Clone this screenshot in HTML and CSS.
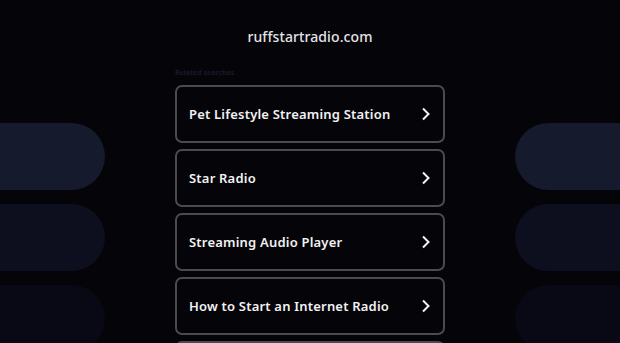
FILE: index.html
```html
<!DOCTYPE html>
<html>
<head>
  <meta name="viewport" content="width=device-width, initial-scale=1.0">
  <link rel="stylesheet" href="styles.css">
</head>
<body>
  <div class="side side-left">
    <div class="pill pill-1"></div>
    <div class="pill pill-2"></div>
    <div class="pill pill-3"></div>
  </div>
  <div class="side side-right">
    <div class="pill pill-1"></div>
    <div class="pill pill-2"></div>
    <div class="pill pill-3"></div>
  </div>
  <div class="container">
    <div class="domain">ruffstartradio.com</div>
    <div class="label">Related searches</div>
    <div class="links">
      <a class="link" href="#"><span>Pet Lifestyle Streaming Station</span><svg class="chev" viewBox="0 0 10 14"><path d="M2 1.5 L7.5 7 L2 12.5" /></svg></a>
      <a class="link" href="#"><span>Star Radio</span><svg class="chev" viewBox="0 0 10 14"><path d="M2 1.5 L7.5 7 L2 12.5" /></svg></a>
      <a class="link" href="#"><span>Streaming Audio Player</span><svg class="chev" viewBox="0 0 10 14"><path d="M2 1.5 L7.5 7 L2 12.5" /></svg></a>
      <a class="link" href="#"><span>How to Start an Internet Radio</span><svg class="chev" viewBox="0 0 10 14"><path d="M2 1.5 L7.5 7 L2 12.5" /></svg></a>
      <a class="link link-more" href="#"></a>
    </div>
  </div>
</body>
</html>
```

FILE: styles.css
```css
* {
  margin: 0;
  padding: 0;
  box-sizing: border-box;
}

body {
  width: 620px;
  height: 343px;
  background: #050409;
  font-family: "Noto Sans", "DejaVu Sans", sans-serif;
  overflow: hidden;
  position: relative;
}

/* Decorative pills on both sides */
.side {
  position: absolute;
  top: 123px;
  width: 105px;
  display: flex;
  flex-direction: column;
  gap: 14px;
}

.side-left {
  left: 0;
}

.side-right {
  left: 515px;
}

.pill {
  height: 67px;
  border-radius: 0 34px 34px 0;
}

.side-right .pill {
  border-radius: 34px 0 0 34px;
}

.pill-1 {
  background: #151a2c;
}

.pill-2 {
  background: #0d0f1f;
}

.pill-3 {
  background: #080914;
}

.container {
  position: relative;
  z-index: 2;
  width: 270px;
  margin: 0 auto;
  display: flex;
  flex-direction: column;
}

.domain {
  color: #e4e4e8;
  font-size: 14px;
  font-weight: 500;
  text-align: center;
  letter-spacing: 0.1px;
  padding-top: 27px;
  height: 63px;
}

.label {
  color: #1a1a28;
  font-size: 7px;
  font-weight: bold;
  height: 22px;
  padding-top: 5px;
}

.links {
  display: flex;
  flex-direction: column;
  gap: 6px;
}

.link {
  height: 58px;
  flex-shrink: 0;
  border: 2px solid #4a4a50;
  border-radius: 7px;
  display: flex;
  align-items: center;
  justify-content: space-between;
  padding: 0 12px 0 12px;
  color: #f2f2f2;
  text-decoration: none;
  font-size: 13px;
  font-weight: 600;
  letter-spacing: 0.2px;
}

.chev {
  width: 10px;
  height: 14px;
  fill: none;
  stroke: #f2f2f2;
  stroke-width: 2;
}
```
